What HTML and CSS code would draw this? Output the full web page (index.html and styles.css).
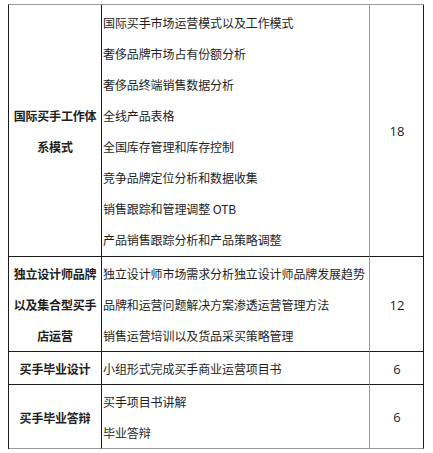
FILE: index.html
```html
<!DOCTYPE html>
<html lang="zh">
<head>
<meta charset="utf-8">
<link rel="stylesheet" href="styles.css">
</head>
<body>
<div class="table">
  <div class="cell label sec1">国际买手工作体<br>系模式</div>
  <div class="cell items sec1">
    <div class="line">国际买手市场运营模式以及工作模式</div>
    <div class="line">奢侈品牌市场占有份额分析</div>
    <div class="line">奢侈品终端销售数据分析</div>
    <div class="line">全线产品表格</div>
    <div class="line">全国库存管理和库存控制</div>
    <div class="line">竞争品牌定位分析和数据收集</div>
    <div class="line">销售跟踪和管理调整 OTB</div>
    <div class="line">产品销售跟踪分析和产品策略调整</div>
  </div>
  <div class="cell num sec1">18</div>

  <div class="cell label sec">独立设计师品牌<br>以及集合型买手<br>店运营</div>
  <div class="cell items sec">
    <div class="line">独立设计师市场需求分析独立设计师品牌发展趋势</div>
    <div class="line">品牌和运营问题解决方案渗透运营管理方法</div>
    <div class="line">销售运营培训以及货品采买策略管理</div>
  </div>
  <div class="cell num sec">12</div>

  <div class="cell label sec">买手毕业设计</div>
  <div class="cell items sec">
    <div class="line">小组形式完成买手商业运营项目书</div>
  </div>
  <div class="cell num sec">6</div>

  <div class="cell label sec last">买手毕业答辩</div>
  <div class="cell items sec last">
    <div class="line">买手项目书讲解</div>
    <div class="line">毕业答辩</div>
  </div>
  <div class="cell num sec last">6</div>
</div>
</body>
</html>
```

FILE: styles.css
```css
html, body {
  margin: 0;
  padding: 0;
  background: #ffffff;
}

body {
  padding: 4px 0 0 8px;
  font-family: "Noto Sans CJK SC", "Noto Sans", sans-serif;
  color: #1e1e1e;
}

.table {
  display: grid;
  grid-template-columns: 93px 268px 54px;
  width: 415px;
  border-left: 1px solid #1a1a1a;
  border-top: 1px solid #9a9a9a;
}

.cell {
  box-sizing: border-box;
  font-size: 12px;
}

.sec1 {
  padding-top: 2px;
  padding-bottom: 1px;
  border-bottom: 1px solid #1a1a1a;
}

.sec {
  padding-top: 1px;
  border-bottom: 1px solid #1a1a1a;
}

.sec.last {
  border-bottom: 1px solid #9a9a9a;
}

.label {
  border-right: 1px solid #1a1a1a;
  font-weight: 700;
  line-height: 31px;
  text-align: center;
  display: flex;
  align-items: center;
  justify-content: center;
  letter-spacing: -0.2px;
}

.items {
  border-right: 1px solid #9a9a9a;
  padding-left: 1px;
}

.line {
  height: 31px;
  line-height: 31px;
  white-space: nowrap;
  letter-spacing: -0.1px;
}

.num {
  border-right: 1px solid #1a1a1a;
  display: flex;
  align-items: center;
  justify-content: center;
  font-family: "Open Sans", "Liberation Sans", sans-serif;
  font-size: 13px;
  padding-left: 1px;
}
```
